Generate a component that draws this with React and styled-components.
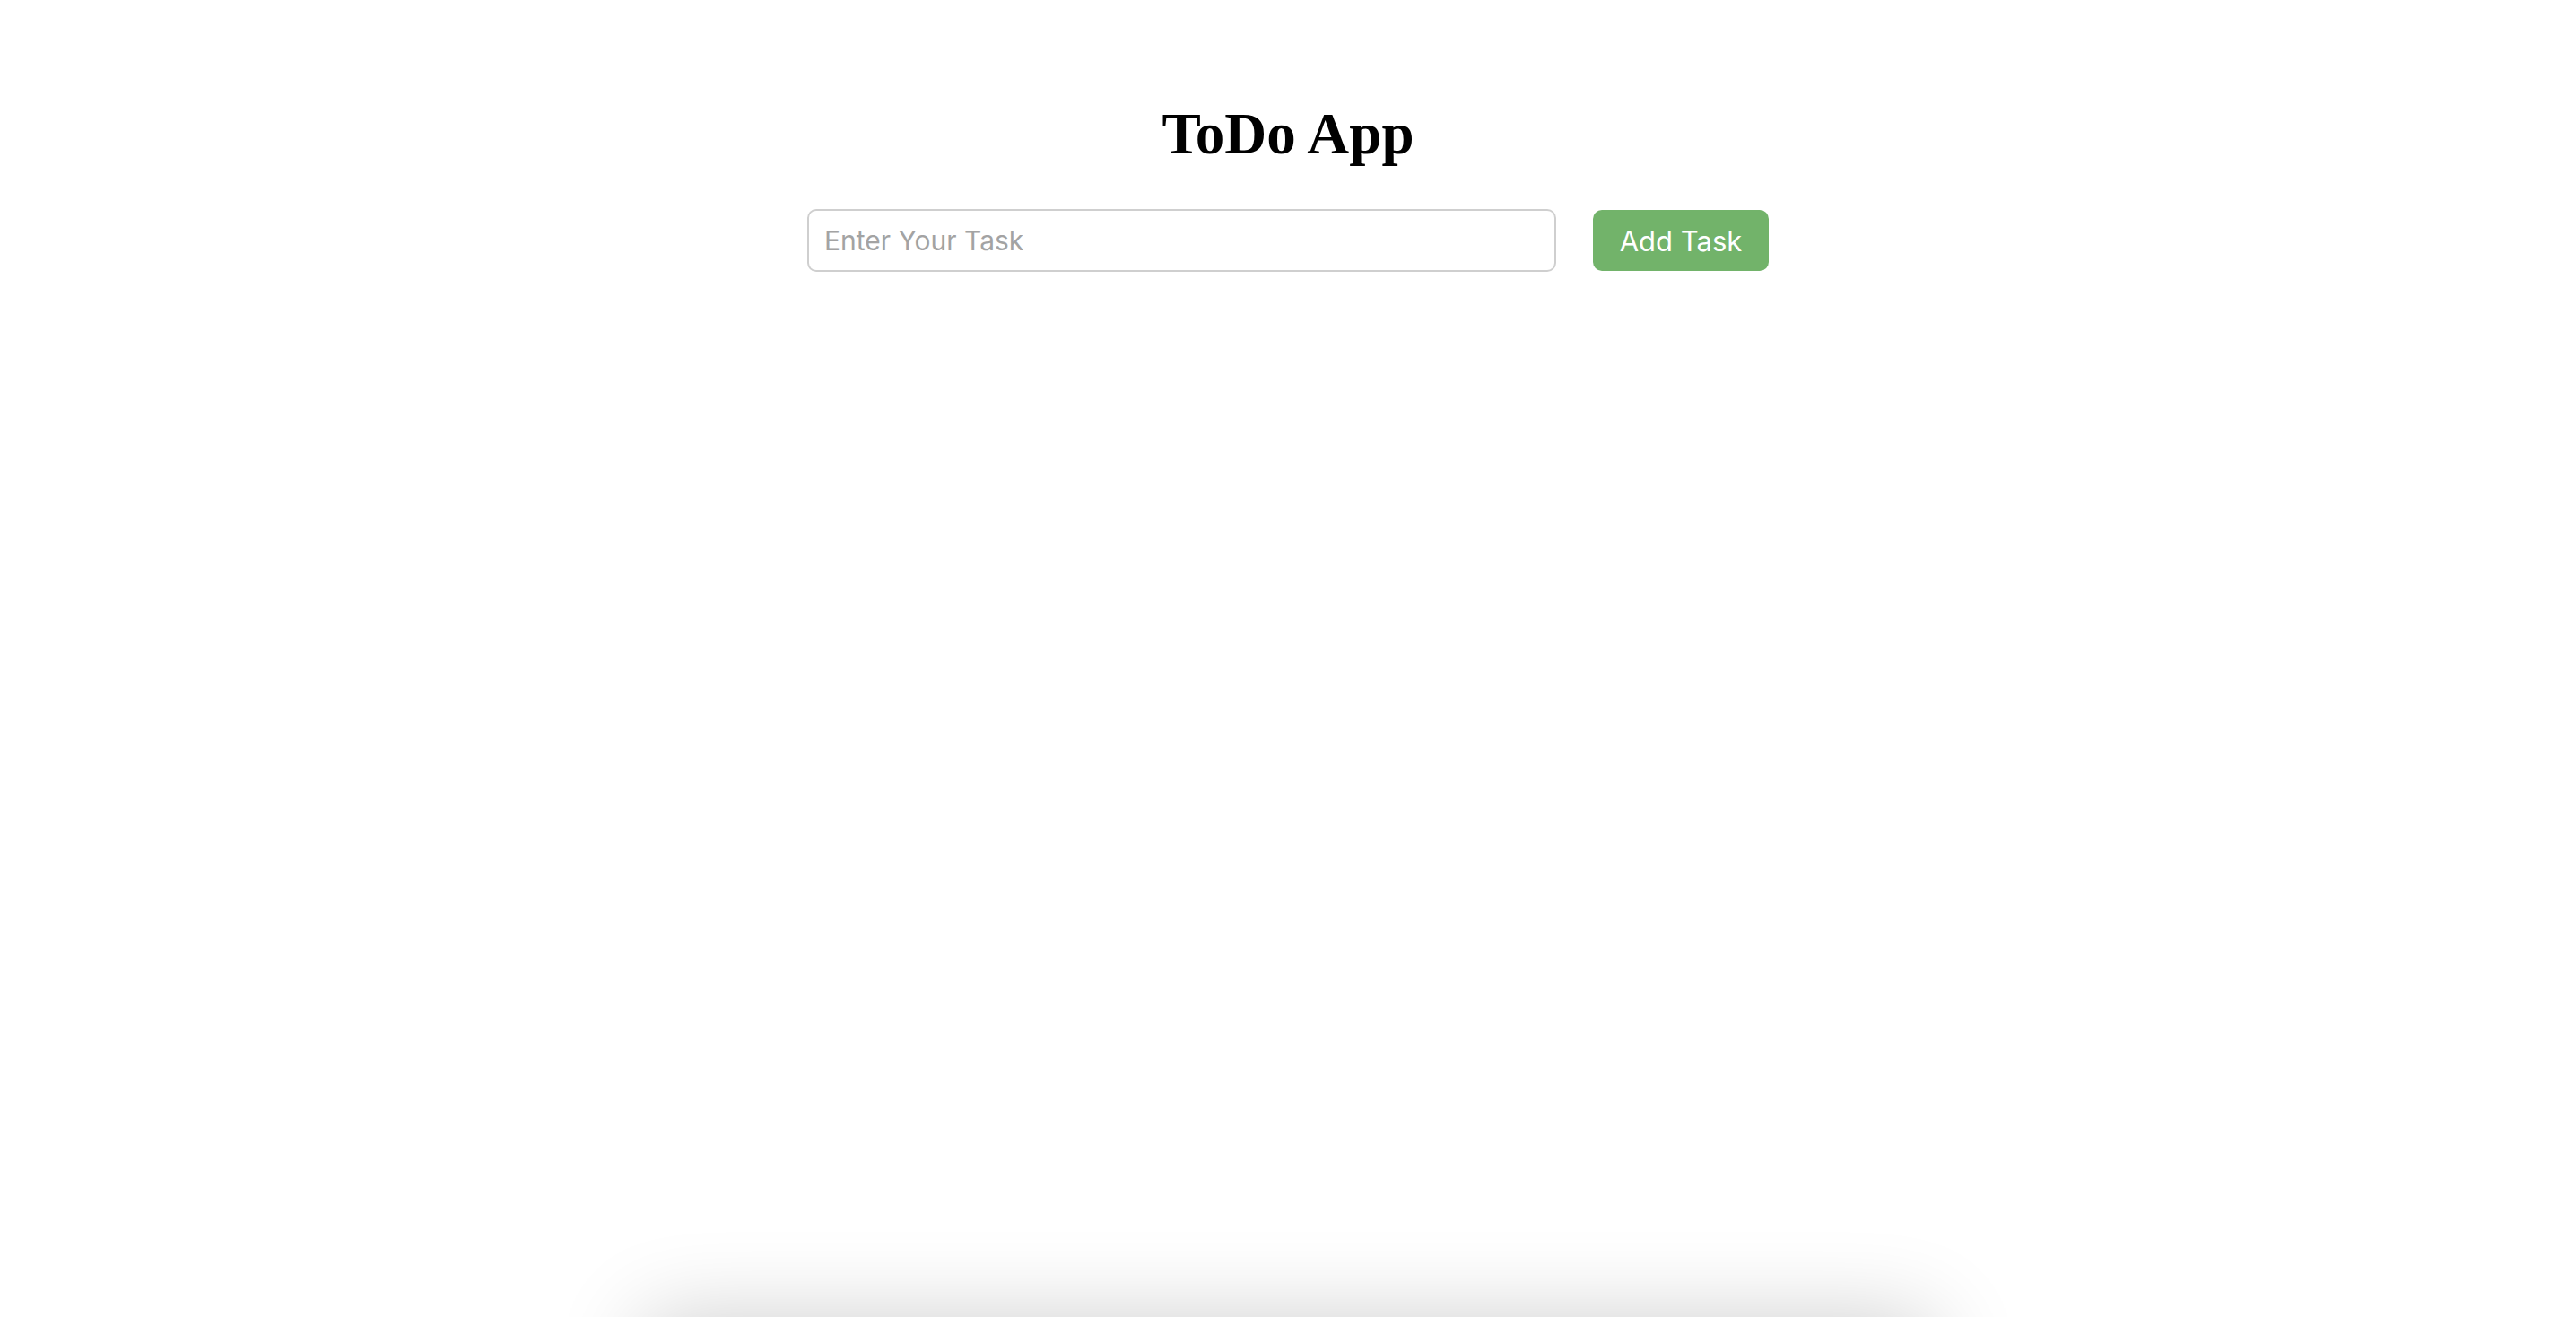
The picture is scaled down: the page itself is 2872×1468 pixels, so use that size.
import React, { useState } from "react";
import styled, { createGlobalStyle } from "styled-components";

const GlobalStyle = createGlobalStyle`
  body {
    margin: 0;
    background: #fff;
  }
`;

const App = () => {
  const [task, setTask] = useState("");
  const [tasks, setTasks] = useState([]);

  const addTask = () => {
    if (!task.trim()) return;
    setTasks([...tasks, task.trim()]);
    setTask("");
  };

  return (
    <>
      <GlobalStyle />
      <Page>
        <Header>
          <Title>ToDo App</Title>
          <Form>
            <Input
              type="text"
              placeholder="Enter Your Task"
              value={task}
              onChange={(e) => setTask(e.target.value)}
            />
            <Button onClick={addTask}>Add Task</Button>
          </Form>
        </Header>
        <TaskList>
          {tasks.map((t, i) => (
            <li key={i}>{t}</li>
          ))}
        </TaskList>
      </Page>
    </>
  );
};

export default App;

const Page = styled.div`
  display: flex;
  flex-direction: column;
  align-items: center;
`;

const Header = styled.div`
  min-height: 1470px;
  padding-top: 112px;
  box-sizing: border-box;
  display: flex;
  flex-direction: column;
  align-items: center;
`;

const Title = styled.h1`
  margin: 0;
  font-family: "Liberation Serif", "Times New Roman", serif;
  font-weight: 700;
  font-size: 65px;
  line-height: 75px;
  color: #000;
`;

const Form = styled.div`
  margin-top: 46px;
  display: flex;
  align-items: center;
  gap: 41px;
`;

const Input = styled.input`
  width: 835px;
  height: 70px;
  box-sizing: border-box;
  padding: 0 17px;
  border: 2px solid #cfcfcf;
  border-radius: 10px;
  font-family: Inter, "Liberation Sans", sans-serif;
  font-size: 30px;
  color: #222;
  outline: none;

  &::placeholder {
    color: #a3a3a3;
  }
`;

const Button = styled.button`
  width: 196px;
  height: 68px;
  border: none;
  border-radius: 10px;
  background: #72b36a;
  color: #fff;
  font-family: Inter, "Liberation Sans", sans-serif;
  font-size: 31px;
  cursor: pointer;
`;

const TaskList = styled.ul`
  width: 1436px;
  min-height: 200px;
  margin: 0;
  padding: 0;
  list-style: none;
  background: #fff;
  box-shadow: 0 0 100px rgba(0, 0, 0, 0.2);
`;
